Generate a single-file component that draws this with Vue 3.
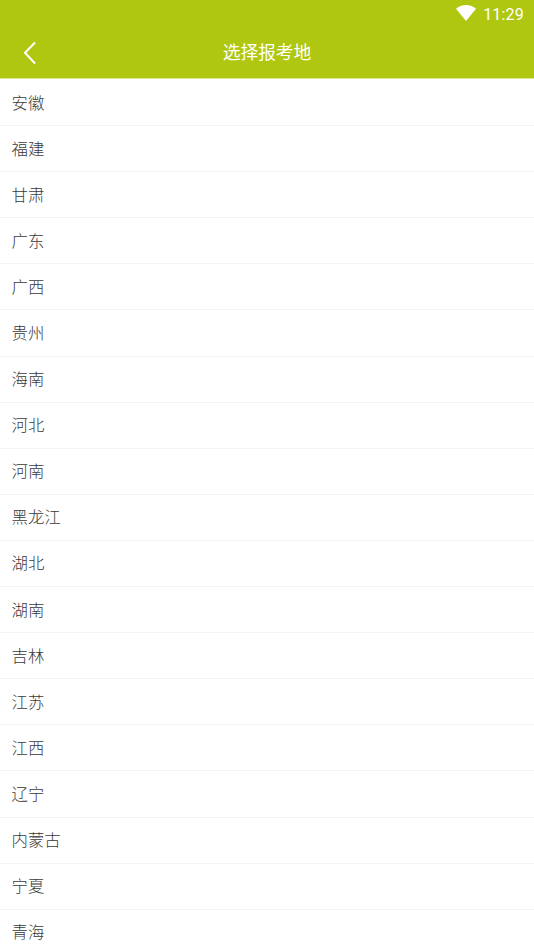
<script setup>
const provinces = ['安徽','福建','甘肃','广东','广西','贵州','海南','河北','河南','黑龙江','湖北','湖南','吉林','江苏','江西','辽宁','内蒙古','宁夏','青海']
</script>

<template>
  <div class="screen">
    <header class="top">
      <div class="status">
        <svg class="wifi" viewBox="0 0 20 15" width="20" height="16" preserveAspectRatio="none">
          <path d="M0 3.6C2.6 1.4 6 0 10 0s7.400 1.400 10 3.600L10 15z" fill="#fff" />
        </svg>
        <span class="time">11:29</span>
      </div>
      <div class="bar">
        <svg class="back" viewBox="0 0 16 26" width="16" height="26">
          <path d="M13 2.500 3 12.800 13 23.500" fill="none" stroke="#fff" stroke-width="2" />
        </svg>
        <span class="title">选择报考地</span>
      </div>
    </header>
    <ul class="list">
      <li v-for="p in provinces" :key="p" class="row">{{ p }}</li>
    </ul>
  </div>
</template>

<style scoped>
.screen {
  width: 534px;
  height: 949px;
  overflow: hidden;
  background: #fff;
  font-family: "Noto Sans CJK SC", "Noto Sans", sans-serif;
}
.top {
  background: #afc711;
  height: 78px;
  border-bottom: 1px solid #dfe89a;
  box-sizing: content-box;
}
.status {
  height: 27px;
  display: flex;
  align-items: center;
  justify-content: flex-end;
  gap: 7px;
  padding-right: 10px;
}
.wifi {
  margin-top: -1px;
}
.time {
  font-family: Roboto, sans-serif;
  font-size: 16px;
  font-weight: 400;
  letter-spacing: 0.2px;
  padding-top: 2px;
  color: #fff;
}
.bar {
  height: 51px;
  position: relative;
  display: flex;
  align-items: center;
  justify-content: center;
  padding-bottom: 3px;
  box-sizing: border-box;
}
.back {
  position: absolute;
  left: 22px;
  top: 13px;
}
.title {
  font-size: 17.700px;
  font-weight: 400;
  color: #fff;
}
.list {
  margin: 0;
  padding: 1px 0 0;
  list-style: none;
}
.row {
  height: 46.100px;
  box-sizing: border-box;
  display: flex;
  align-items: center;
  padding: 0 0 2px 11.500px;
  font-size: 16.400px;
  font-weight: 300;
  color: #3a3a3a;
  border-bottom: 1px solid #f4f4f4;
}
</style>
